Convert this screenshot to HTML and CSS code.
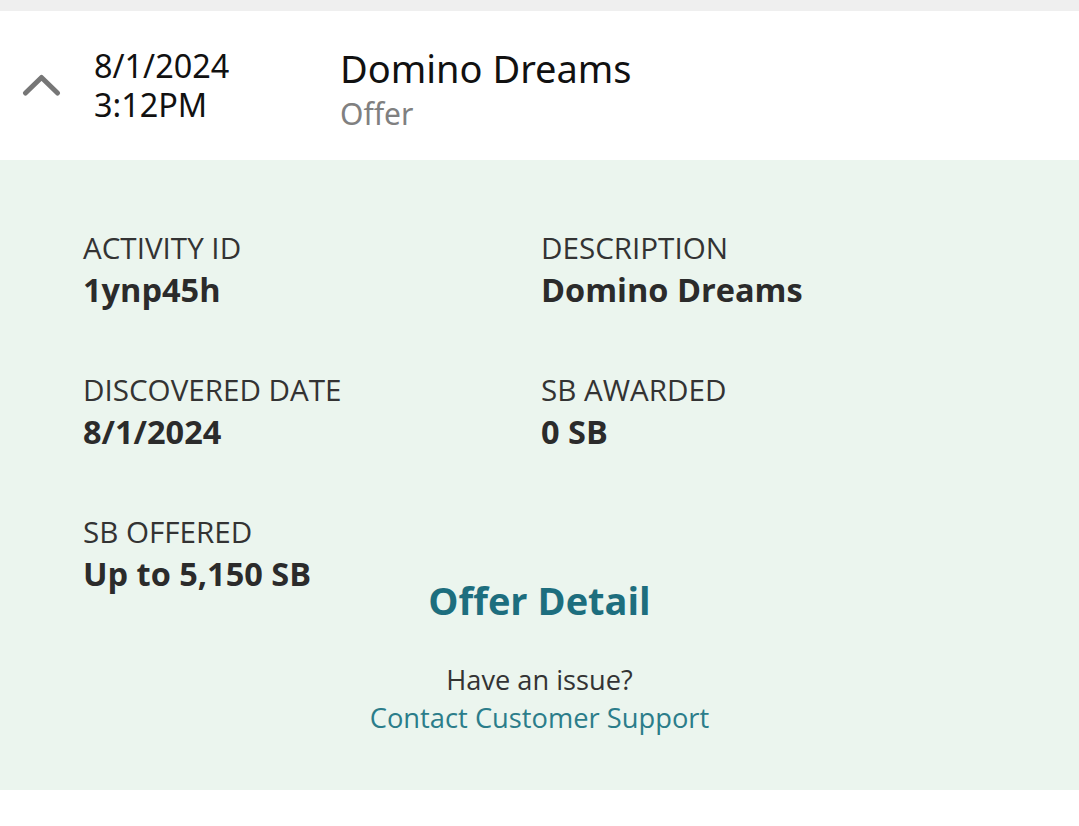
FILE: index.html
```html
<!DOCTYPE html>
<html>
<head>
<meta charset="utf-8">
<link rel="stylesheet" href="styles.css">
</head>
<body>
<div class="topstrip"></div>
<div class="header">
  <div class="chevron">
    <svg width="40" height="24" viewBox="0 0 40 24"><path d="M3.5 19 L19.5 3.5 L35.5 19" fill="none" stroke="#767676" stroke-width="5" stroke-linecap="round" stroke-linejoin="round"/></svg>
  </div>
  <div class="when">
    <div class="line">8/1/2024</div>
    <div class="line">3:12PM</div>
  </div>
  <div class="title">
    <div class="name">Domino Dreams</div>
    <div class="type">Offer</div>
  </div>
</div>
<div class="panel">
  <div class="grid">
    <div class="field"><div class="label">ACTIVITY ID</div><div class="value">1ynp45h</div></div>
    <div class="field"><div class="label">DESCRIPTION</div><div class="value">Domino Dreams</div></div>
    <div class="field"><div class="label">DISCOVERED DATE</div><div class="value">8/1/2024</div></div>
    <div class="field"><div class="label">SB AWARDED</div><div class="value">0 SB</div></div>
    <div class="field"><div class="label">SB OFFERED</div><div class="value">Up to 5,150 SB</div></div>
  </div>
  <div class="detail">Offer Detail</div>
  <div class="issue">Have an issue?</div>
  <div class="support">Contact Customer Support</div>
</div>
</body>
</html>
```
FILE: styles.css
```css
html, body { margin: 0; padding: 0; background: #ffffff; }
body { font-family: "Open Sans", "Noto Sans", sans-serif; color: #2e2e2e; }
.topstrip { height: 11px; background: #efefef; }
.header { height: 149px; display: flex; align-items: flex-start; font-family: "Noto Sans", "Open Sans", sans-serif; }
.chevron { width: 94px; padding-top: 63px; padding-left: 22px; box-sizing: border-box; }
.chevron svg { display: block; }
.when { width: 246px; padding-top: 35px; font-size: 32.4px; line-height: 39px; color: #111; }
.title { padding-top: 34px; }
.name { font-size: 38px; line-height: 46px; color: #111; }
.type { font-size: 30px; line-height: 46px; color: #808080; }
.panel { background: #ebf5ee; height: 630px; box-sizing: border-box; padding-top: 68px; }
.grid { display: grid; grid-template-columns: 458px 1fr; padding-left: 83px; row-gap: 58px; }
.label { font-size: 29.6px; line-height: 40px; color: #333; }
.value { font-size: 32.5px; line-height: 44px; font-weight: 700; color: #2b2b2b; }
.detail { text-align: center; font-size: 38px; font-weight: 700; color: #1d6e7e; line-height: 48px; margin-top: -20px; }
.issue { text-align: center; font-size: 27.2px; line-height: 38px; color: #333; margin-top: 37px; }
.support { text-align: center; font-size: 27.3px; line-height: 38px; color: #2b7d8a; }
```
